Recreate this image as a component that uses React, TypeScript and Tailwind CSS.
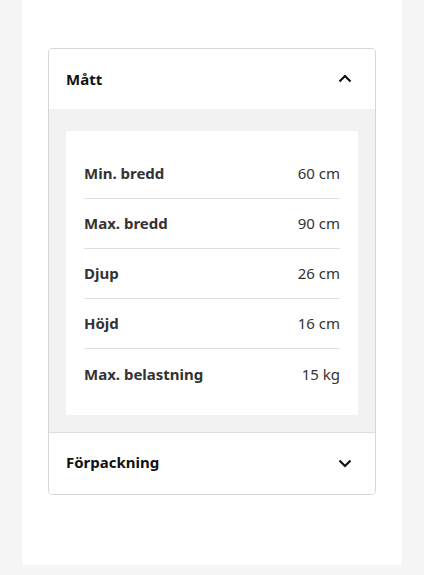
import React from "react";

const rows = [
  { label: "Min. bredd", value: "60 cm" },
  { label: "Max. bredd", value: "90 cm" },
  { label: "Djup", value: "26 cm" },
  { label: "Höjd", value: "16 cm" },
  { label: "Max. belastning", value: "15 kg" },
];

function Chevron({ up }: { up?: boolean }) {
  return (
    <svg width="16" height="16" viewBox="0 0 16 16" className={up ? "rotate-180" : ""}>
      <path d="M2.5 5.5 8 11l5.5-5.5" fill="none" stroke="#111" strokeWidth="2.2" />
    </svg>
  );
}

export default function App() {
  return (
    <div className="min-h-[575px] w-full bg-[#f5f5f5] px-[22px] pb-[10px] font-['Noto_Sans',sans-serif]">
      <div className="bg-white px-[26px] pt-[48px] pb-[70px]">
        <div className="rounded-[4px] border border-[#d6d6d6] overflow-hidden">
          {/* Mått */}
          <button className="flex h-[60px] w-full items-center justify-between bg-white pl-[17px] pr-[22px]">
            <span className="text-[15px] font-bold text-[#111]">Mått</span>
            <Chevron up />
          </button>
          <div className="bg-[#f2f2f2] px-[17px] pt-[22px] pb-[17px]">
            <div className="bg-white px-[18px] pt-[18px] pb-[16px]">
              {rows.map((r, i) => (
                <div
                  key={r.label}
                  className={`flex h-[50px] items-center justify-between ${i < rows.length - 1 ? "border-b border-[#dfdfdf]" : ""}`}
                >
                  <span className="text-[15px] font-bold text-[#333]">{r.label}</span>
                  <span className="text-[15px] text-[#333]">{r.value}</span>
                </div>
              ))}
            </div>
          </div>
          {/* Förpackning */}
          <button className="flex h-[62px] w-full items-center justify-between border-t border-[#dfdfdf] bg-white pl-[17px] pr-[22px] pb-[2px]">
            <span className="text-[15px] font-bold text-[#111]">Förpackning</span>
            <Chevron />
          </button>
        </div>
      </div>
    </div>
  );
}
